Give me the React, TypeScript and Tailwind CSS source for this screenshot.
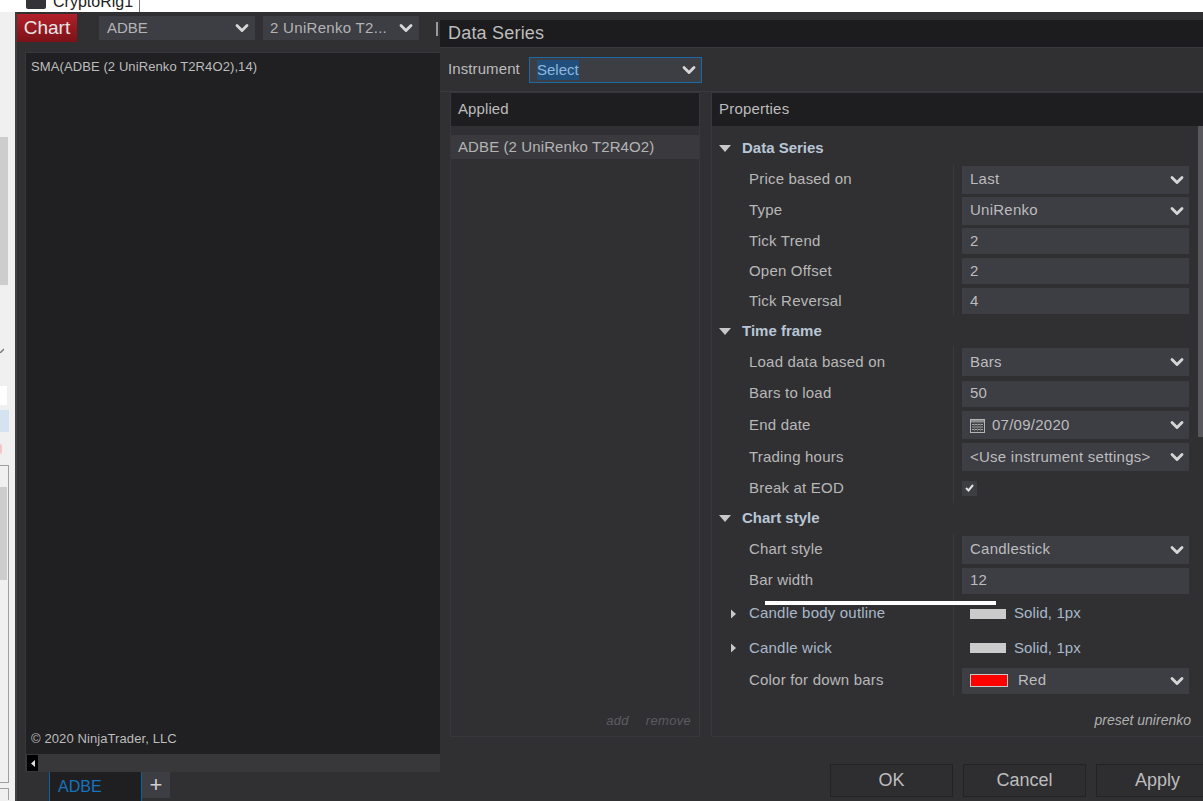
import { ChevronDown } from "lucide-react";

const FONT = "font-['Liberation_Sans',Arial,sans-serif]";

function Chevron() {
  return <ChevronDown size={20} strokeWidth={3.4} className="text-[#d6d6d6] shrink-0" />;
}

function Tri({ open }: { open: boolean }) {
  return open ? (
    <svg width="12" height="7" viewBox="0 0 12 7" className="shrink-0">
      <path d="M0 0h12L6 7z" fill="#c8c8c8" />
    </svg>
  ) : (
    <svg width="5" height="9" viewBox="0 0 5 9" className="shrink-0">
      <path d="M0 0l5 4.5L0 9z" fill="#c8c8c8" />
    </svg>
  );
}

function CalendarGlyph() {
  return (
    <svg width="15" height="15" viewBox="0 0 15 15" className="shrink-0">
      <rect x="0.5" y="1.5" width="14" height="13" fill="none" stroke="#b5b5b5" />
      <rect x="1" y="2" width="13" height="2.5" fill="#8f8f8f" />
      <path d="M2 6.5h11M2 9h11M2 11.5h11" stroke="#a8a8a8" />
      <path d="M4.5 5.5v8M7.5 5.5v8M10.5 5.5v8" stroke="#6c6c6c" />
    </svg>
  );
}

type Row = {
  label: string;
  h: number;
  value?: string;
  select?: boolean;
  kind?: "date" | "check" | "stroke" | "color";
  group?: boolean;
};

const rows: Row[] = [
  { label: "Data Series", h: 31, group: true },
  { label: "Price based on", h: 31, value: "Last", select: true },
  { label: "Type", h: 31, value: "UniRenko", select: true },
  { label: "Tick Trend", h: 30, value: "2" },
  { label: "Open Offset", h: 30, value: "2" },
  { label: "Tick Reversal", h: 30, value: "4" },
  { label: "Time frame", h: 30, group: true },
  { label: "Load data based on", h: 32, value: "Bars", select: true },
  { label: "Bars to load", h: 31, value: "50" },
  { label: "End date", h: 32, value: "07/09/2020", select: true, kind: "date" },
  { label: "Trading hours", h: 32, value: "<Use instrument settings>", select: true },
  { label: "Break at EOD", h: 30, kind: "check" },
  { label: "Chart style", h: 31, group: true },
  { label: "Chart style", h: 31, value: "Candlestick", select: true },
  { label: "Bar width", h: 31, value: "12" },
  { label: "Candle body outline", h: 35, value: "Solid, 1px", kind: "stroke" },
  { label: "Candle wick", h: 34, value: "Solid, 1px", kind: "stroke" },
  { label: "Color for down bars", h: 31, value: "Red", select: true, kind: "color" },
];

function PropRow({ row }: { row: Row }) {
  if (row.group) {
    return (
      <div className="flex items-center pl-[7px]" style={{ height: row.h }}>
        <Tri open />
        <span className="ml-[11px] text-[15px] font-bold text-[#b9c6d6]">{row.label}</span>
      </div>
    );
  }
  const box = row.kind !== "check" && row.kind !== "stroke";
  const tall = row.select && row.kind !== "color";
  return (
    <div className="flex items-stretch" style={{ height: row.h }}>
      <div className="w-[242px] shrink-0 flex items-center border-r border-[#3a3a3e] relative">
        {row.kind === "stroke" && (
          <span className="absolute left-[19px] top-1/2 -translate-y-1/2 flex">
            <Tri open={false} />
          </span>
        )}
        <span
          className={
            "ml-[37px] text-[15px] tracking-[0.2px] " + (row.kind === "stroke" ? "text-[#a9b8c9]" : "text-[#b8b8b8]")
          }
        >
          {row.label}
        </span>
      </div>
      <div className="flex items-center pl-[8px]">
        {box && (
          <div
            className={
              "w-[227px] bg-[#3d3d44] flex items-center pl-[8px] pr-[2px] text-[15px] tracking-[0.25px] text-[#bcbcbc] " +
              (tall ? "h-[28px]" : "h-[26px]")
            }
          >
            {row.kind === "date" && (
              <span className="mr-[7px]">
                <CalendarGlyph />
              </span>
            )}
            {row.kind === "color" && (
              <span className="w-[38px] h-[13px] bg-[#ff0000] border border-[#c8c8c8] mr-[10px] shrink-0" />
            )}
            <span className="flex-1 whitespace-nowrap">{row.value}</span>
            {row.select && <Chevron />}
          </div>
        )}
        {row.kind === "check" && (
          <div className="w-[15px] h-[15px] bg-[#3d3d44] flex items-center justify-center">
            <svg width="9" height="8" viewBox="0 0 9 8">
              <path d="M1 4l2.5 2.5L8 1" fill="none" stroke="#e2e2e2" strokeWidth="2" />
            </svg>
          </div>
        )}
        {row.kind === "stroke" && (
          <div className="flex items-center pl-[8px]">
            <span className="w-[36px] h-[10px] bg-[#cbcbcb] mr-[8px]" />
            <span className="text-[15px] tracking-[0.1px] text-[#a9b8c9]">{row.value}</span>
          </div>
        )}
      </div>
    </div>
  );
}

function DialogButton({ label }: { label: string }) {
  return (
    <div className="w-[123px] h-[33px] shrink-0 border border-[#232326] bg-[#2e2e31] flex items-center justify-center text-[18px] text-[#bdbdbd]">
      {label}
    </div>
  );
}

function LeftStrip() {
  return (
    <div className="w-[15px] shrink-0 bg-[#f0f0f0] flex flex-col">
      <div className="h-[125px] shrink-0" />
      <div className="h-[148px] w-[8px] shrink-0 bg-[#cdcdcd]" />
      <div className="h-[101px] shrink-0 flex items-end pb-[33px]">
        <svg width="4" height="5" viewBox="0 0 4 5">
          <path d="M0 5L4 1" stroke="#777" strokeWidth="1.5" />
        </svg>
      </div>
      <div className="h-[19px] w-[7px] shrink-0 bg-white" />
      <div className="h-[22px] w-[9px] shrink-0 mt-[5px] bg-[#d5e3f0]" />
      <div className="h-[33px] shrink-0 flex items-center">
        <span className="w-[2px] h-[10px] bg-[#f5c6c6] rounded-r-full" />
      </div>
      <div className="h-[318px] w-[9px] shrink-0 border border-l-0 border-[#a0a0a0] pt-[21px]">
        <div className="h-[93px] w-[7px] bg-[#cdcdcd]" />
      </div>
      <div className="h-[12px] w-[9px] shrink-0 mt-[5px] border border-l-0 border-b-0 border-[#a0a0a0]" />
    </div>
  );
}

function ChartWindow() {
  return (
    <div className="w-[425px] shrink-0 h-full bg-[#303033] flex flex-col border-l-2 border-[#3f3f42]">
      <div className="h-[28px] flex items-stretch shrink-0 mt-[2px]">
        <div className="w-[60px] bg-gradient-to-b from-[#b3202a] to-[#7c1218] text-[#e6e6e6] text-[19px] flex items-center justify-center">
          Chart
        </div>
        <div className="w-[156px] ml-[22px] my-[2px] bg-[#3d3d44] flex items-center pl-[8px] pr-[3px] text-[15px] text-[#b4b4b4]">
          <span className="flex-1">ADBE</span>
          <Chevron />
        </div>
        <div className="w-[156px] ml-[8px] my-[2px] bg-[#3d3d44] flex items-center pl-[7px] pr-[3px] text-[15px] tracking-[0.3px] text-[#b4b4b4]">
          <span className="flex-1 whitespace-nowrap">2 UniRenko T2...</span>
          <Chevron />
        </div>
        <div className="ml-[17px] mt-[8px] w-[2px] h-[14px] bg-[#9a9a9a]" />
      </div>
      <div className="flex-1 ml-[8px] mt-[10px] flex flex-col border border-[#38383c] border-b-0 border-r-0 min-h-0">
        <div className="flex-1 bg-[#202022] flex flex-col justify-between pl-[5px] pt-[4px] pb-[6px] text-[13px] tracking-[0.1px] text-[#bcbcbc]">
          <span>SMA(ADBE (2 UniRenko T2R4O2),14)</span>
          <span>© 2020 NinjaTrader, LLC</span>
        </div>
        <div className="h-[18px] bg-[#38383b] flex items-center shrink-0">
          <div className="ml-[1px] w-[11px] h-[16px] bg-black flex items-center justify-center">
            <svg width="4" height="7" viewBox="0 0 4 7">
              <path d="M4 0v7L0 3.5z" fill="#e0e0e0" />
            </svg>
          </div>
        </div>
      </div>
      <div className="h-[29px] flex items-stretch shrink-0 pl-[32px]">
        <div className="w-[93px] bg-[#1f1f21] border-x border-[#10609f] flex items-center pl-[8px] text-[16px] text-[#1673bf]">
          ADBE
        </div>
        <div className="w-[28px] mb-[3px] bg-[#3d3d44] flex items-center justify-center text-[22px] leading-none text-[#d0d0d0]">
          +
        </div>
      </div>
    </div>
  );
}

function Dialog() {
  return (
    <div className="flex-1 h-full bg-[#303033] flex flex-col min-w-0 overflow-hidden relative">
      <div className="h-[27px] bg-[#1c1c1e] shrink-0 mt-[8px] flex items-center pl-[8px] text-[18px] tracking-[0.2px] text-[#bdbdbd]">
        Data Series
      </div>
      <div className="h-[44px] shrink-0 border-t border-[#3a3a3e] flex items-center pl-[8px]">
        <span className="text-[15px] text-[#bcbcbc] tracking-[0.1px] w-[81px] shrink-0 whitespace-nowrap">Instrument</span>
        <div className="w-[173px] h-[26px] bg-[#3d3d44] border border-[#1a6aa8] flex items-center pl-[7px] pr-[2px]">
          <span className="flex-1">
            <span className="inline-block bg-[#204f7c] text-[15px] leading-[20px] text-[#8fb7dc]">Select</span>
          </span>
          <Chevron />
        </div>
      </div>
      <div className="flex flex-1 min-h-0 border-t border-[#3a3a3e] pl-[10px]">
        <div className="w-[250px] shrink-0 flex flex-col border border-[#38383c]">
          <div className="h-[33px] shrink-0 bg-[#1e1e20] flex items-center pl-[7px] text-[15px] tracking-[0.1px] text-[#bcbcbc]">
            Applied
          </div>
          <div className="h-[24px] mt-[9px] bg-[#3a3a3e] flex items-center pl-[7px] text-[15px] tracking-[0.1px] text-[#b4b4b4] whitespace-nowrap">
            ADBE (2 UniRenko T2R4O2)
          </div>
          <div className="flex-1 flex items-end justify-end gap-[17px] pr-[8px] pb-[6px] text-[13px] tracking-[0.3px] italic text-[#5c5c60]">
            <span>add</span>
            <span>remove</span>
          </div>
        </div>
        <div className="ml-[11px] flex-1 min-w-0 flex flex-col border border-[#38383c] border-r-0 relative">
          <div className="h-[33px] shrink-0 bg-[#1e1e20] flex items-center pl-[7px] text-[15px] tracking-[0.2px] text-[#bcbcbc]">
            Properties
          </div>
          <div className="flex-1 min-h-0 overflow-hidden relative pt-[7px]">
            {rows.map((r, i) => (
              <PropRow key={i} row={r} />
            ))}
            <div className="absolute right-0 top-0 w-[5px] h-[311px] bg-[#58585c]" />
            <div className="absolute left-[53px] top-[475px] w-[231px] h-[4px] bg-white" />
            <span className="absolute right-[12px] bottom-[5px] text-[14px] italic text-[#b0b0b0]">preset unirenko</span>
          </div>
        </div>
      </div>
      <div className="h-[64px] shrink-0 flex items-start pt-[27px] pl-[390px] gap-[10px]">
        <DialogButton label="OK" />
        <DialogButton label="Cancel" />
        <DialogButton label="Apply" />
      </div>
    </div>
  );
}

export default function App() {
  return (
    <div className={"w-[1203px] h-[801px] overflow-hidden flex flex-col bg-white " + FONT}>
      <div className="h-[12px] shrink-0 bg-white overflow-hidden relative">
        <div className="absolute left-[26px] -top-[8px] flex items-center">
          <span className="w-[20px] h-[14px] bg-[#333338] rounded-[2px] mr-[7px]" />
          <span className="text-[16px] leading-[20px] text-[#222] pr-[6px] border-r border-[#777]">CryptoRig1</span>
        </div>
      </div>
      <div className="flex flex-1 min-h-0">
        <LeftStrip />
        <ChartWindow />
        <Dialog />
      </div>
    </div>
  );
}
